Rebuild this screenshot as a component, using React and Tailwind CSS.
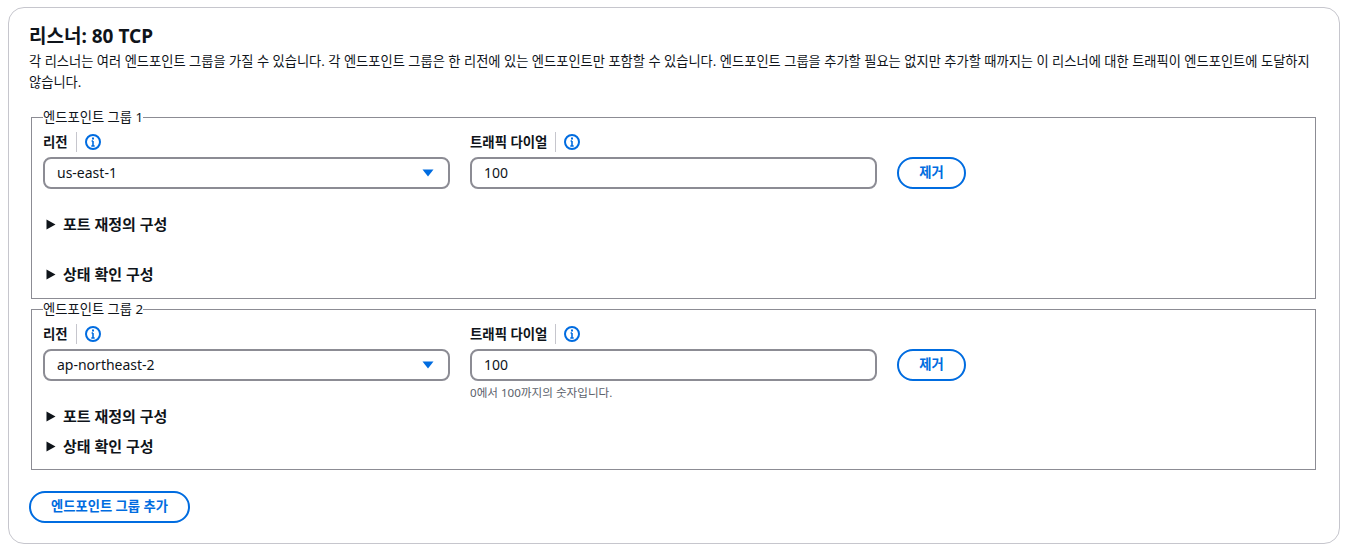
const FONT = "font-['Noto_Sans','Noto_Sans_CJK_KR',sans-serif]";

const InfoIcon = () => (
  <svg viewBox="0 0 16 16" className="w-4 h-4 -mt-[1px] text-[#006ce0]" fill="none" stroke="currentColor">
    <circle cx="8" cy="8" r="7" strokeWidth="2" />
    <path d="M8 7v5M6.3 12h3.4M6.6 7H8" strokeWidth="1.6" />
    <path d="M8 3.4v2" strokeWidth="2" />
  </svg>
);

const FieldLabel = ({ children }) => (
  <div className="flex items-center h-5">
    <span className="text-[13.4px] leading-5 font-bold text-[#0f141a]">{children}</span>
    <span className="ml-[8px] mr-[8px] w-px h-5 bg-[#c6c6cd]" />
    <InfoIcon />
  </div>
);

const Section = ({ title, className }) => (
  <div className={`flex items-center h-5 ${className}`}>
    <svg viewBox="0 0 10 11" className="w-[10px] h-[11px] ml-[3px] mr-[7px] text-[#0f141a]">
      <path d="M0.5 0.5 L9.5 5.5 L0.5 10.5 Z" fill="currentColor" />
    </svg>
    <span className="text-[15px] leading-5 font-bold text-[#0f141a]">{title}</span>
  </div>
);

const EndpointGroup = ({ index, region, hint, first }) => (
  <fieldset className={`border border-[#8c8c94] px-[11px] ${first ? 'h-[189px]' : 'h-[168px]'}`}>
    <legend className="text-[13.3px] leading-[14px] text-[#0f141a]">엔드포인트 그룹 {index}</legend>
    <div className="flex gap-5 mt-[8px]">
      <div className="w-[407px]">
        <FieldLabel>리전</FieldLabel>
        <div className="mt-[5px] h-8 border-2 border-[#8c8c94] rounded-lg flex items-center justify-between pl-[12px] pr-[14px]">
          <span className="text-[14px] pb-[2px] text-[#0f141a]">{region}</span>
          <svg viewBox="0 0 12 8" className="w-[12px] h-[8px] text-[#006ce0]">
            <path d="M0.5 0.5 H11.5 L6 7.5 Z" fill="currentColor" />
          </svg>
        </div>
      </div>
      <div className="w-[407px]">
        <FieldLabel>트래픽 다이얼</FieldLabel>
        <div className="mt-[5px] h-8 border-2 border-[#8c8c94] rounded-lg flex items-center pl-[12px]">
          <span className="text-[14px] pb-[2px] text-[#0f141a]">100</span>
        </div>
        {hint && <p className="mt-[5px] text-[11.6px] leading-[14px] text-[#5b616b]">{hint}</p>}
      </div>
      <button className="mt-[25px] w-[69px] h-8 border-2 border-[#006ce0] rounded-full text-[13.3px] font-bold text-[#006ce0]">
        제거
      </button>
    </div>
    <Section title="포트 재정의 구성" className={first ? 'mt-[25px]' : 'mt-[6px]'} />
    <Section title="상태 확인 구성" className={first ? 'mt-[30px]' : 'mt-[10px]'} />
  </fieldset>
);

export default function App() {
  return (
    <div className={`${FONT} bg-white w-[1347px] h-[555px] pl-[8px] pt-[7px]`}>
      <div className="w-[1332px] h-[537px] bg-white border border-[#c6c6cd] rounded-2xl pl-[20px] pr-[22px] pt-[15px]">
        <h2 className="text-[19px] leading-[26px] font-bold text-[#0f141a]">리스너: 80 TCP</h2>
        <p className="mt-[2px] text-[13.25px] leading-[21px] text-[#0f141a]">
          각 리스너는 여러 엔드포인트 그룹을 가질 수 있습니다. 각 엔드포인트 그룹은 한 리전에 있는 엔드포인트만 포함할 수 있습니다. 엔드포인트 그룹을 추가할 필요는 없지만 추가할 때까지는 이 리스너에 대한 트래픽이 엔드포인트에 도달하지 않습니다.
        </p>
        <div className="mt-[17px] ml-[2px] w-[1285px] flex flex-col gap-[3px]">
          <EndpointGroup index={1} region="us-east-1" first />
          <EndpointGroup index={2} region="ap-northeast-2" hint="0에서 100까지의 숫자입니다." />
        </div>
        <button className="mt-[21px] w-[161px] h-8 border-2 border-[#006ce0] rounded-full text-[13.3px] font-bold text-[#006ce0]">
          엔드포인트 그룹 추가
        </button>
      </div>
    </div>
  );
}
